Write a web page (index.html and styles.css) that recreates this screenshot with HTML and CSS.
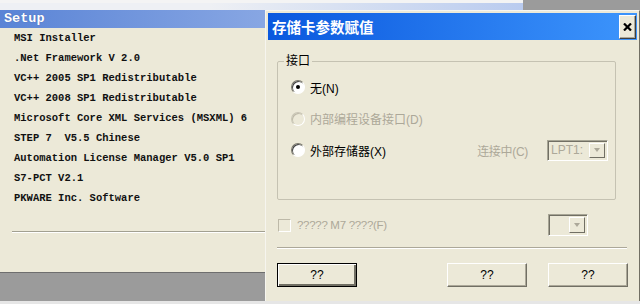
FILE: index.html
```html
<!DOCTYPE html>
<html lang="zh-CN">
<head>
  <meta charset="UTF-8" />
  <meta name="viewport" content="width=device-width, initial-scale=1.0"/>
  <link rel="stylesheet" href="styles.css">
</head>
<body>
  <div class="desktop">

    <div class="setup-win">
      <div class="setup-top"></div>
      <div class="setup-title">Setup</div>
      <ul class="setup-list">
        <li>MSI Installer</li>
        <li>.Net Framework V 2.0</li>
        <li>VC++ 2005 SP1 Redistributable</li>
        <li>VC++ 2008 SP1 Redistributable</li>
        <li>Microsoft Core XML Services (MSXML) 6</li>
        <li>STEP 7  V5.5 Chinese</li>
        <li>Automation License Manager V5.0 SP1</li>
        <li>S7-PCT V2.1</li>
        <li>PKWARE Inc. Software</li>
      </ul>
      <div class="setup-sep"></div>
    </div>

    <div class="dialog">
      <div class="titlebar">
        <span class="title">存储卡参数赋值</span>
        <button class="close-btn">
          <svg width="9" height="8" viewBox="0 0 9 8">
            <path d="M1 0.5 L8 7.5 M8 0.5 L1 7.5" stroke="#000" stroke-width="2.2"/>
          </svg>
        </button>
      </div>

      <div class="dialog-body">
        <fieldset class="group">
          <legend>接口</legend>
          <div class="radio-row">
            <span class="radio checked"></span>
            <span>无(N)</span>
          </div>
          <div class="radio-row disabled">
            <span class="radio"></span>
            <span>内部编程设备接口(D)</span>
          </div>
          <div class="radio-row">
            <span class="radio"></span>
            <span>外部存储器(X)</span>
            <span class="port-label">连接中(C)</span>
            <div class="combo port-combo">
              <span class="combo-text">LPT1:</span>
              <span class="combo-btn"><span class="arrow"></span></span>
            </div>
          </div>
        </fieldset>

        <div class="check-row">
          <span class="checkbox"></span>
          <span class="check-text">????? M7 ????(F)</span>
          <div class="combo small-combo">
            <span class="combo-text"></span>
            <span class="combo-btn"><span class="arrow"></span></span>
          </div>
        </div>

        <div class="dialog-sep"></div>

        <div class="buttons">
          <button class="btn default">??</button>
          <button class="btn push-right">??</button>
          <button class="btn">??</button>
        </div>
      </div>
    </div>

  </div>
</body>
</html>
```

FILE: styles.css
```css
body {
  margin: 0;
  padding: 0;
  background-color: #9b9b9b;
}

.desktop {
  position: relative;
  width: 640px;
  height: 304px;
  overflow: hidden;
  background-color: #9b9b9b;
  border-bottom: 3px solid #e6e6e6;
  box-sizing: border-box;
}

/* window behind */
.setup-win {
  position: absolute;
  left: 0;
  top: 0;
  width: 523px;
  height: 273px;
  background-color: #ece9d8;
  border-bottom: 1px solid #6e6e6e;
  box-sizing: border-box;
}

.setup-top {
  height: 10px;
  background: linear-gradient(to right, #eef0f4 40%, #b9cbef);
  border-top: 3px solid #f4f4f4;
  box-sizing: border-box;
}

.setup-title {
  height: 18px;
  line-height: 18px;
  padding-left: 4px;
  background: linear-gradient(to right, #5a84d6, #b4c8f0);
  color: #fff;
  font-family: "Liberation Mono", monospace;
  font-weight: bold;
  font-size: 13.5px;
  text-shadow: 0 0 1px #3a5aa0;
}

.setup-list {
  list-style: none;
  margin: 0;
  padding: 0 0 0 14px;
  font-family: "Liberation Mono", monospace;
  font-weight: bold;
  font-size: 10.5px;
  color: #111;
}

.setup-list li {
  height: 20px;
  line-height: 20px;
  white-space: pre;
}

.setup-sep {
  margin: 23px 0 0 12px;
  border-top: 1px solid #a2a091;
  border-bottom: 1px solid #fff;
}

/* dialog */
.dialog {
  position: absolute;
  left: 265px;
  top: 10px;
  width: 375px;
  height: 292px;
  padding: 2px;
  box-sizing: border-box;
  background-color: #ece9d8;
  border: 1px solid;
  border-color: #f6f5ef #716f64 #716f64 #f6f5ef;
  font-family: "Liberation Sans", "Noto Sans CJK SC", sans-serif;
  font-size: 12px;
  color: #000;
}

.titlebar {
  height: 27px;
  display: flex;
  align-items: center;
  justify-content: space-between;
  padding: 0 1px 0 4px;
  background: linear-gradient(to right, #0a58de, #3d95fc);
}

.title {
  color: #fff;
  font-family: "Noto Sans CJK SC", sans-serif;
  font-weight: bold;
  font-size: 14.5px;
}

.close-btn {
  width: 17px;
  height: 24px;
  padding: 0;
  display: flex;
  align-items: center;
  justify-content: center;
  background-color: #ece9d8;
  border: 1px solid;
  border-color: #fff #404040 #404040 #fff;
  box-shadow: inset -1px -1px #aca899;
}

.dialog-body {
  padding: 0 9px;
}

.group {
  width: 339px;
  height: 146px;
  margin: 14px 0 0 0;
  padding: 9px 7px 0 13px;
  box-sizing: border-box;
  border: 1px solid #c5c2b2;
  border-radius: 2px;
  display: flex;
  flex-direction: column;
  gap: 11.5px;
}

.group legend {
  margin-left: -7px;
  padding: 0 2px;
  line-height: 14px;
  font-size: 12px;
}

.radio-row {
  height: 20px;
  display: flex;
  align-items: center;
  gap: 5px;
}

.radio-row.disabled {
  color: #aca899;
}

.radio {
  width: 12px;
  height: 12px;
  border-radius: 50%;
  background-color: #fff;
  border: 1px solid;
  border-color: #7a786c #fff #fff #7a786c;
  box-shadow: inset 1px 1px #404040;
  position: relative;
  flex-shrink: 0;
}

.radio-row.disabled .radio {
  background-color: #ece9d8;
  box-shadow: inset 1px 1px #bdb9a8;
  border-color: #c9c6b6 #fff #fff #c9c6b6;
}

.radio.checked::after {
  content: "";
  position: absolute;
  left: 4px;
  top: 4px;
  width: 4px;
  height: 4px;
  border-radius: 50%;
  background-color: #000;
}

.port-label {
  margin-left: auto;
  margin-right: 14px;
  color: #aca899;
  letter-spacing: -0.3px;
}

.combo {
  display: flex;
  align-items: stretch;
  height: 21px;
  box-sizing: border-box;
  padding: 2px;
  border: 1px solid;
  border-color: #a7a595 #fff #fff #a7a595;
  box-shadow: inset 1px 1px #716f64;
  background-color: #ece9d8;
}

.port-combo {
  width: 61px;
}

.small-combo {
  width: 40px;
  height: 22px;
  margin-left: auto;
  margin-right: 40px;
}

.combo-text {
  flex: 1;
  color: #aca899;
  line-height: 15px;
  padding-left: 1px;
}

.combo-btn {
  width: 16px;
  display: flex;
  align-items: center;
  justify-content: center;
  border: 1px solid;
  border-color: #fff #716f64 #716f64 #fff;
  box-sizing: border-box;
}

.arrow {
  width: 0;
  height: 0;
  border-left: 3.5px solid transparent;
  border-right: 3.5px solid transparent;
  border-top: 4px solid #aca899;
}

.check-row {
  height: 22px;
  margin-top: 14px;
  display: flex;
  align-items: center;
}

.checkbox {
  width: 13px;
  height: 13px;
  margin-left: 1px;
  box-sizing: border-box;
  border: 1px solid;
  border-color: #bdb9a8 #fff #fff #bdb9a8;
  background-color: #ece9d8;
}

.check-text {
  margin-left: 6px;
  color: #aca899;
  font-size: 11.5px;
  letter-spacing: -0.3px;
}

.dialog-sep {
  width: 350px;
  margin-top: 11px;
  border-top: 1px solid #aca899;
  border-bottom: 1px solid #fff;
}

.buttons {
  margin-top: 14px;
  display: flex;
  gap: 21px;
}

.btn {
  width: 80px;
  height: 24px;
  padding: 0;
  font-family: "Liberation Sans", sans-serif;
  font-size: 12px;
  color: #000;
  background-color: #ece9d8;
  border: 1px solid;
  border-color: #fff #716f64 #716f64 #fff;
  box-shadow: inset -1px -1px #aca899;
}

.btn.default {
  border: 1px solid #000;
  box-shadow: inset 1px 1px #fff, inset -2px -2px #716f64;
}

.push-right {
  margin-left: auto;
}
```
